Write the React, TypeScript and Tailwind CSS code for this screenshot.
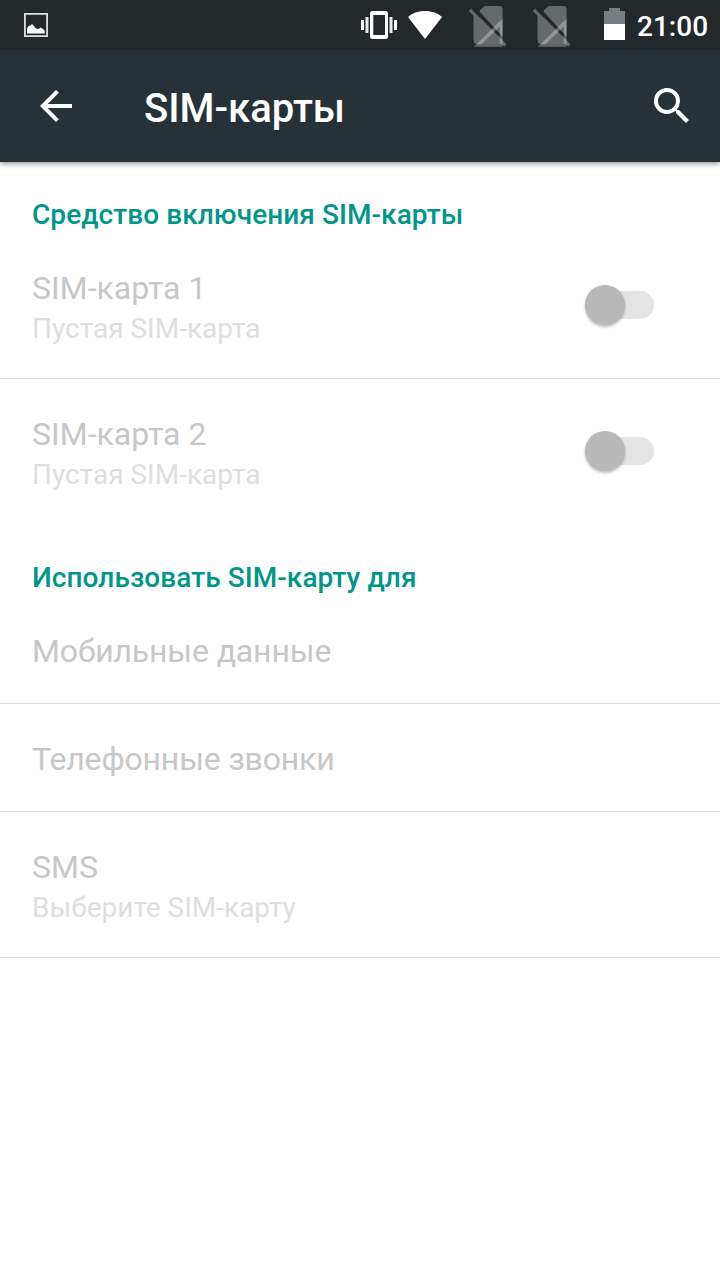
import { useState } from "react";

interface SimSlot {
  id: number;
  title: string;
  summary: string;
  enabled: boolean;
}

interface Preference {
  title: string;
  summary?: string;
}

const SIM_SLOTS: SimSlot[] = [
  { id: 1, title: "SIM-карта 1", summary: "Пустая SIM-карта", enabled: false },
  { id: 2, title: "SIM-карта 2", summary: "Пустая SIM-карта", enabled: false },
];

const PREFERENCES: Preference[] = [
  { title: "Мобильные данные" },
  { title: "Телефонные звонки" },
  { title: "SMS", summary: "Выберите SIM-карту" },
];

function ScreenshotIcon() {
  return (
    <svg width="24" height="24" viewBox="0 0 24 24" className="mt-[13px]">
      <rect x="0.9" y="0.9" width="22.2" height="22.2" fill="none" stroke="#dcdddd" strokeWidth="1.8" />
      <path d="M3 20.5v-5l1.5-2.5 2-.5 1.5-1.500 1.500 1.500 1.500 2 2 1.500 2-.2 1.500-1.300 1.500 1 1.500.7 1.200 1.800v2.500z" fill="#fff" />
    </svg>
  );
}

function VibrateIcon() {
  return (
    <svg width="36" height="28" viewBox="0 0 36 28" className="mt-[11px]" fill="#fff">
      <path
        fillRule="evenodd"
        d="M11.5 0h13a2.5 2.5 0 0 1 2.5 2.5v23a2.5 2.5 0 0 1-2.5 2.5h-13A2.5 2.5 0 0 1 9 25.5v-23A2.5 2.5 0 0 1 11.5 0zM12.3 4v20H24V4z"
      />
      <path d="M0 9h3v10H0zM33 9h3v10h-3z" />
      <path d="M4.5 6h3v16h-3zM28.5 6h3v16h-3z" opacity="0.9" />
    </svg>
  );
}

function WifiIcon() {
  return (
    <svg width="34" height="28" viewBox="0 0 34 28" className="mt-[11px] ml-[11px]">
      <path d="M17 28L0 6C4 2.3 10 0 17 0s13 2.3 17 6z" fill="#fff" />
    </svg>
  );
}

function NoSimIcon() {
  return (
    <svg width="40" height="42" viewBox="0 0 40 42" className="mt-[5px]">
      <path
        d="M11.3 6.3L16 1.600Q16.600 1 18 1h13.600a3 3 0 0 1 3 3v31.300a4 4 0 0 1-4 4H9.500a4 4 0 0 1-4-4V6.300z"
        fill="#65696c"
      />
      <path d="M4.200 0L11.300 6.300L36.500 33.700V37L4 5z" fill="#23282b" />
      <path d="M4 7V3l32.500 32.500V40z" fill="#23282b" />
      <path d="M1.900 4.900L37.400 40.400" stroke="#65696c" strokeWidth="3.300" />
      <path
        fillRule="evenodd"
        d="M34.600 13.600V41.700H5.800zM31.700 21.500L13.500 39.300H31.700z"
        fill="#fff"
        fillOpacity="0.3"
      />
    </svg>
  );
}

function BatteryIcon() {
  return (
    <svg width="21" height="32" viewBox="0 0 21 32" className="mt-[8px]">
      <path d="M5 0h11v3h5v13H0V3h5z" fill="#7b7e80" />
      <path d="M0 16h21v16H0z" fill="#fff" />
    </svg>
  );
}

function StatusBar() {
  return (
    <div className="flex h-[50px] items-start bg-[#23282b] pl-6 pr-3">
      <ScreenshotIcon />
      <div className="ml-auto flex items-start">
        <VibrateIcon />
        <WifiIcon />
        <div className="ml-[26px] flex gap-6">
          <NoSimIcon />
          <NoSimIcon />
        </div>
        <div className="ml-8">
          <BatteryIcon />
        </div>
        <span className="ml-3 mt-[10px] w-[71px] whitespace-nowrap text-[28px] font-medium leading-[34px] text-white">
          21:00
        </span>
      </div>
    </div>
  );
}

function AppBar() {
  return (
    <header className="relative flex h-28 items-center bg-[#263238] pl-8 pr-6 shadow-[0_2px_5px_rgba(0,0,0,0.4)]">
      <button type="button" aria-label="Назад" className="size-12">
        <svg width="48" height="48" viewBox="0 0 24 24" fill="#fff">
          <path d="M20 11H7.83l5.59-5.59L12 4l-8 8 8 8 1.41-1.41L7.83 13H20v-2z" />
        </svg>
      </button>
      <h1 className="ml-16 mt-1.5 text-[40px] font-medium leading-[48px] text-white">SIM-карты</h1>
      <button type="button" aria-label="Поиск" className="ml-auto size-12">
        <svg width="48" height="48" viewBox="0 0 24 24" fill="#fff">
          <path d="M15.5 14h-.79l-.28-.27A6.471 6.471 0 0 0 16 9.5 6.5 6.5 0 1 0 9.5 16c1.61 0 3.09-.59 4.23-1.57l.27.28v.79l5 4.99L20.49 19l-4.99-5zm-6 0C7.01 14 5 11.99 5 9.5S7.01 5 9.5 5 14 7.01 14 9.5 11.99 14 9.5 14z" />
        </svg>
      </button>
    </header>
  );
}

function CategoryTitle({ children }: { children: string }) {
  return (
    <h2 className="h-[71px] px-8 pt-9 text-[28px] font-medium leading-[33px] tracking-[0.07px] text-[#009688]">
      {children}
    </h2>
  );
}

function PreferenceText({ title, summary }: Preference) {
  return (
    <div className="flex flex-col">
      <span className="text-[32px] leading-[38px] text-[#c7c7c7]">{title}</span>
      {summary ? <span className="mt-[5px] text-[28px] leading-[33px] text-[#dedede]">{summary}</span> : null}
    </div>
  );
}

function Toggle({ checked, onChange }: { checked: boolean; onChange: () => void }) {
  return (
    <button
      type="button"
      role="switch"
      aria-checked={checked}
      disabled
      onClick={onChange}
      className="mt-[15px] flex h-7 w-[68px] items-center rounded-full bg-[#e4e4e4]"
    >
      <span className="-ml-px size-10 shrink-0 rounded-full bg-[#b9b9b9] shadow-[0_2px_3px_rgba(0,0,0,0.25)]" />
    </button>
  );
}

export default function App() {
  const [slots, setSlots] = useState(SIM_SLOTS);

  function handleToggle(id: number) {
    setSlots((prev) => prev.map((slot) => (slot.id === id ? { ...slot, enabled: !slot.enabled } : slot)));
  }

  return (
    <div className="h-[1280px] w-[720px] overflow-hidden bg-white font-['Roboto',sans-serif]">
      <StatusBar />
      <AppBar />
      <main>
        <section>
          <CategoryTitle>Средство включения SIM-карты</CategoryTitle>
          {slots.map((slot) => (
            <div
              key={slot.id}
              className="flex h-[146px] items-start justify-between border-b border-[#dedede] pl-8 pr-[66px] pt-9 last:border-b-0"
            >
              <PreferenceText title={slot.title} summary={slot.summary} />
              <div className="pt-[7px]">
                <Toggle checked={slot.enabled} onChange={() => handleToggle(slot.id)} />
              </div>
            </div>
          ))}
        </section>
        <section>
          <CategoryTitle>Использовать SIM-карту для</CategoryTitle>
          {PREFERENCES.map((preference) => (
            <div
              key={preference.title}
              className="border-b border-[#dedede] px-8 pb-[33px] pt-9 tracking-[-0.15px] last:tracking-normal"
            >
              <PreferenceText {...preference} />
            </div>
          ))}
        </section>
      </main>
    </div>
  );
}
